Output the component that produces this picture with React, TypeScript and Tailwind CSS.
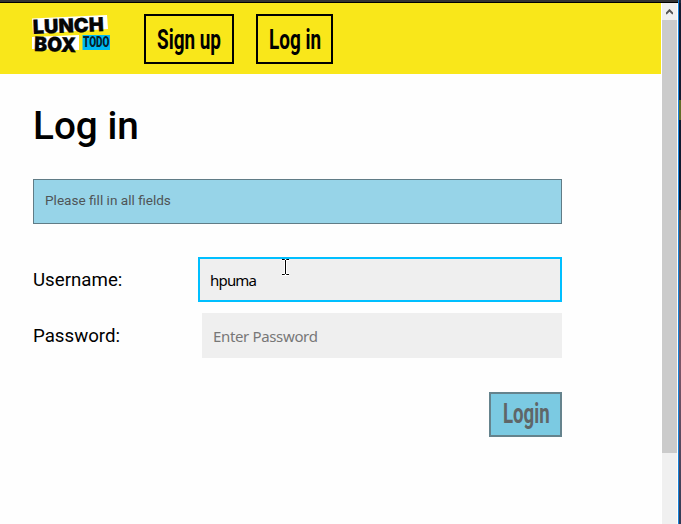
import type { ReactNode } from "react";

function Logo() {
  return (
    <svg width="80" height="40" viewBox="0 0 80 40" className="block overflow-visible" aria-label="Lunch Box Todo">
      <polygon points="0,3.5 75,0 76,14 1,19" fill="#fff" />
      <polygon points="0,22 47,20 47,35 0,34" fill="#fff" />
      <rect x="50.5" y="20" width="27.5" height="15" fill="#00b9f2" />
      <g fontFamily="Inter, sans-serif" fontWeight="900" fill="#050505" stroke="#050505" strokeWidth="0.3">
        <text x="1" y="19" fontSize="19.5" textLength="71" lengthAdjust="spacingAndGlyphs" transform="rotate(-2.2 1 19)">LUNCH</text>
        <text x="2" y="36" fontSize="20" textLength="42" lengthAdjust="spacingAndGlyphs" transform="rotate(1.5 2 36)">BOX</text>
      </g>
      <text x="51" y="32" fontFamily="Roboto, sans-serif" fontWeight="900" fontSize="14.5" textLength="26.5" lengthAdjust="spacingAndGlyphs" fill="#05202a">TODO</text>
    </svg>
  );
}

function Condensed({ children, className }: { children: ReactNode; className: string }) {
  return (
    <span className={`block shrink-0 whitespace-nowrap text-[27px] leading-8 font-bold ${className}`}>
      {children}
    </span>
  );
}

function Scrollbar() {
  return (
    <div className="flex w-[18px] shrink-0 border-r border-[#1581d8] bg-white pl-px">
      <div className="w-[15px] bg-[#f0f0f0]">
        <div className="flex h-[17px] items-center justify-center">
          <svg width="7" height="6" viewBox="0 0 7 6" className="block">
            <path d="M0 4.9 3.5 1.3 7 4.9" fill="none" stroke="#555" strokeWidth="2" />
          </svg>
        </div>
        <div className="h-[433px] bg-[#cbcbcb]" />
      </div>
    </div>
  );
}

export default function App() {
  return (
    <div className="flex h-[524px] w-[681px] flex-col overflow-hidden bg-[#fefefe] font-[Roboto,sans-serif] text-black">
      <div className="flex h-[3px] shrink-0">
        <div className="w-[678px] border-b border-black bg-[#333]" />
        <div className="w-px bg-[#1581d8]" />
        <div className="grow bg-[#202a40]" />
      </div>
      <div className="flex min-h-0 grow">
        <div className="w-[661px] shrink-0">
          <header className="flex h-[71px] items-start bg-[#f9e71a] pt-[11px] pl-8">
            <div className="pt-px">
              <Logo />
            </div>
            <button className="ml-8 flex h-[50px] w-[90px] items-center border-2 border-black pt-0.5 pl-[11px]">
              <Condensed className="origin-left scale-x-[0.7]">Sign up</Condensed>
            </button>
            <button className="ml-[22px] flex h-[50px] w-[77px] items-center border-2 border-black pt-0.5 pl-[11px]">
              <Condensed className="origin-left scale-x-[0.7]">Log in</Condensed>
            </button>
          </header>
          <main className="w-[562px] pl-[33px]">
            <h1 className="pt-[29px] text-[38.7px] leading-[46px] font-medium">Log in</h1>
            <div className="mt-[30px] h-[45px] border border-[#607c86] bg-[#97d4e8] pt-3 pl-[11px] text-[13.6px] leading-[17px] text-[#4f5557]">
              Please fill in all fields
            </div>
            <form className="pt-[33px]" onSubmit={(e) => e.preventDefault()}>
              <div className="flex h-[45px] items-center justify-between">
                <label className="pt-0.5 text-[18.7px]">Username:</label>
                <input
                  defaultValue="hpuma"
                  className="h-[45px] w-[364px] border-2 border-[#00bfff] bg-[#efefef] pl-2.5 font-['Noto_Sans',sans-serif] text-[15px] tracking-[-0.8px] outline-none"
                />
              </div>
              <div className="mt-[11px] flex h-[45px] items-center justify-between">
                <label className="pt-0.5 text-[18.7px]">Password:</label>
                <input
                  placeholder="Enter Password"
                  className="h-[45px] w-[360px] bg-[#efefef] pl-[11px] font-['Noto_Sans',sans-serif] text-[15px] tracking-[-0.35px] outline-none placeholder:text-[#777]"
                />
              </div>
              <div className="mt-[34px] flex justify-end">
                <button className="flex h-[45px] w-[73px] items-center border-2 border-[#65838d] bg-[#7bcae2] pb-0.5 pl-3 text-[#5f6668]">
                  <Condensed className="origin-left scale-x-[0.69]">Login</Condensed>
                </button>
              </div>
            </form>
          </main>
        </div>
        <Scrollbar />
        <div className="flex grow flex-col">
          <div className="h-[97px] bg-[#141b30]" />
          <div className="h-5 bg-[#626c28]" />
          <div className="h-[90px] bg-[#101a30]" />
          <div className="grow bg-linear-to-b from-[#594b47] via-[#7c5668] to-[#303a55]" />
        </div>
      </div>
      <svg className="absolute top-[259px] left-[281px]" width="9" height="17" viewBox="0 0 9 17">
        <path d="M1 .5h2.5L4.5 1.5 5.5.5H8M4.5 1v14M1 15.5h2.5l1-1 1 1H8" fill="none" stroke="#fff" strokeWidth="3" />
        <path d="M1 .5h2.5L4.5 1.5 5.5.5H8M4.5 1v14M1 15.5h2.5l1-1 1 1H8" fill="none" stroke="#000" />
      </svg>
    </div>
  );
}
